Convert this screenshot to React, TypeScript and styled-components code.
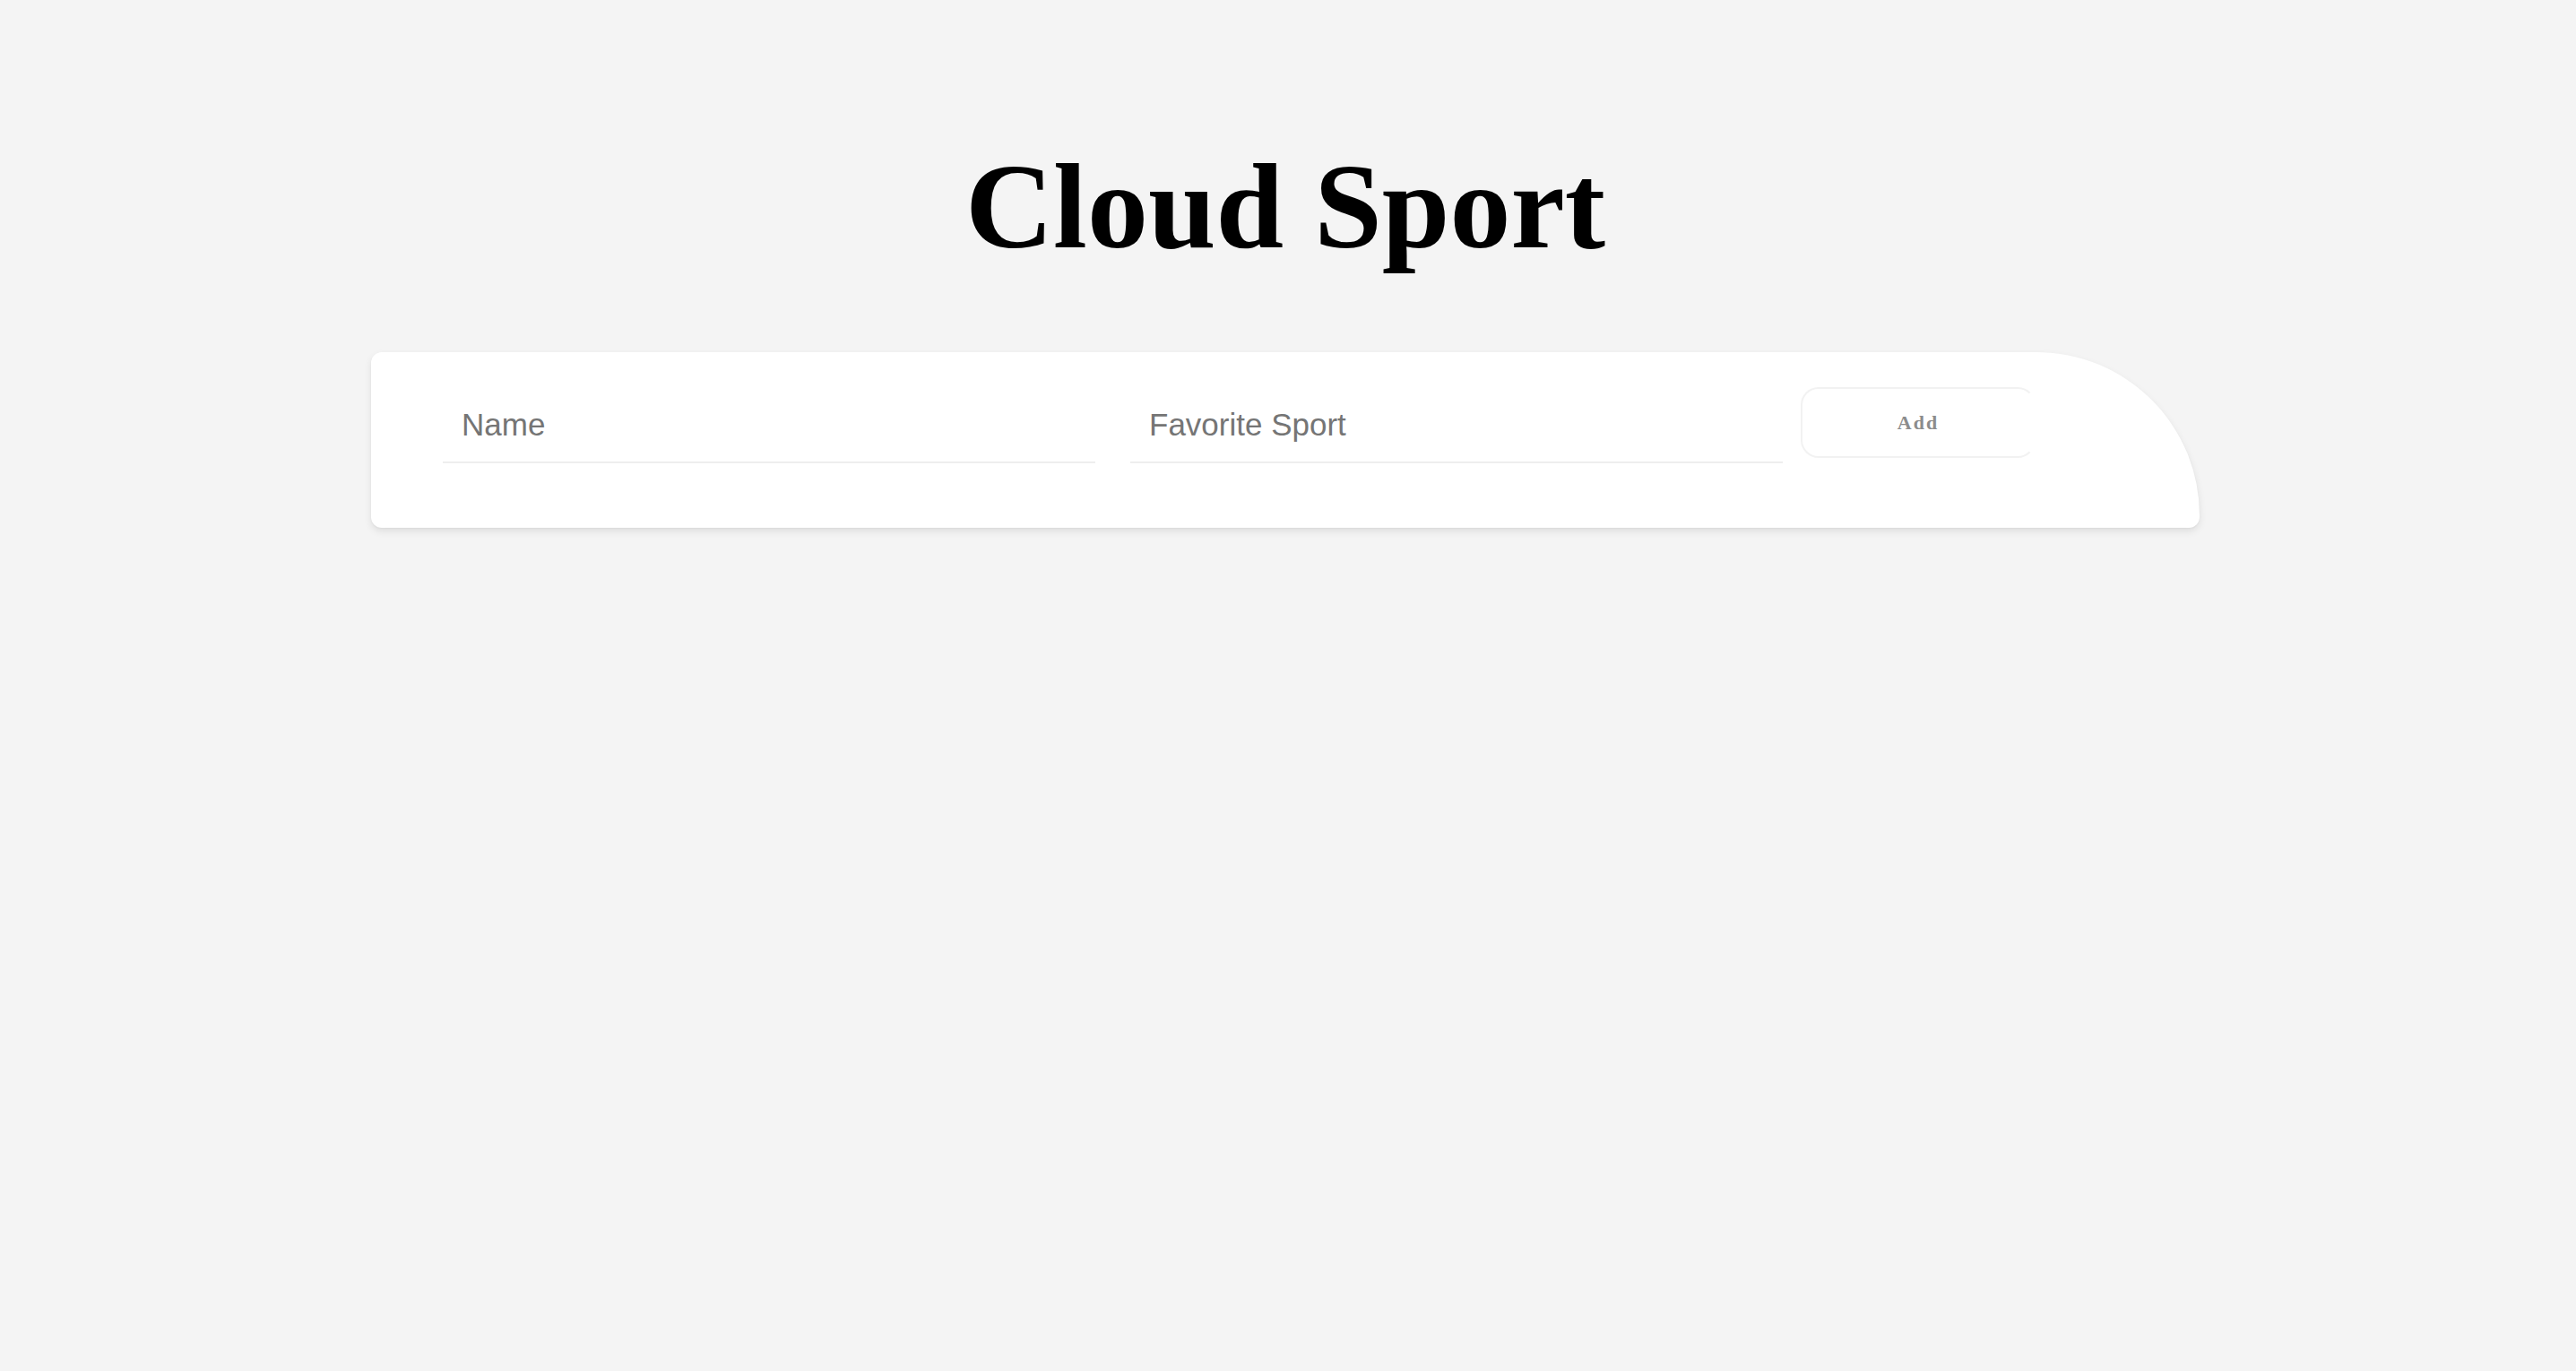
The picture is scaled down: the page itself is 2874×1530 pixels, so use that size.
import React from "react";
import styled, { createGlobalStyle } from "styled-components";

const Global = createGlobalStyle`
  html, body {
    margin: 0;
    padding: 0;
    background: #f4f4f4;
  }
  body {
    min-height: 1530px;
  }
`;

const Page = styled.main`
  display: flex;
  flex-direction: column;
  align-items: center;
  padding-top: 152px;
  padding-right: 6px;
`;

const Title = styled.h1`
  margin: 0 0 85px;
  font-family: "Liberation Serif", "Times New Roman", serif;
  font-weight: 700;
  font-size: 136px;
  line-height: normal;
  color: #000;
`;

const Card = styled.form`
  box-sizing: border-box;
  width: 2040px;
  height: 196px;
  padding: 39px 0 72px 80px;
  background: #ffffff;
  border-radius: 12px 182px 12px 12px;
  box-shadow: 0 4px 8px rgba(0, 0, 0, 0.09), 0 1px 2px rgba(0, 0, 0, 0.04);
  display: flex;
  align-items: flex-start;
`;

const Field = styled.input<{ $gap: number }>`
  box-sizing: border-box;
  width: 728px;
  height: 85px;
  margin-right: ${(p) => p.$gap}px;
  padding: 0 0 0 21px;
  border: none;
  border-bottom: 2px solid #eeeeee;
  outline: none;
  background: transparent;
  font-family: "Liberation Sans", Arial, sans-serif;
  font-size: 35px;
  color: #333;
  &::placeholder {
    color: #757575;
  }
`;

const AddButton = styled.button`
  box-sizing: border-box;
  width: 262px;
  height: 79px;
  border: 2px solid #f2f2f2;
  border-right-color: transparent;
  border-radius: 20px;
  background: #fff;
  font-family: "Liberation Serif", "Times New Roman", serif;
  font-weight: 700;
  font-size: 22px;
  letter-spacing: 2px;
  color: #8c8c8c;
  cursor: pointer;
`;

export default function App() {
  return (
    <>
      <Global />
      <Page>
        <Title>Cloud Sport</Title>
        <Card onSubmit={(e) => e.preventDefault()}>
          <Field $gap={39} placeholder="Name" />
          <Field $gap={20} placeholder="Favorite Sport" />
          <AddButton type="submit">Add</AddButton>
        </Card>
      </Page>
    </>
  );
}
